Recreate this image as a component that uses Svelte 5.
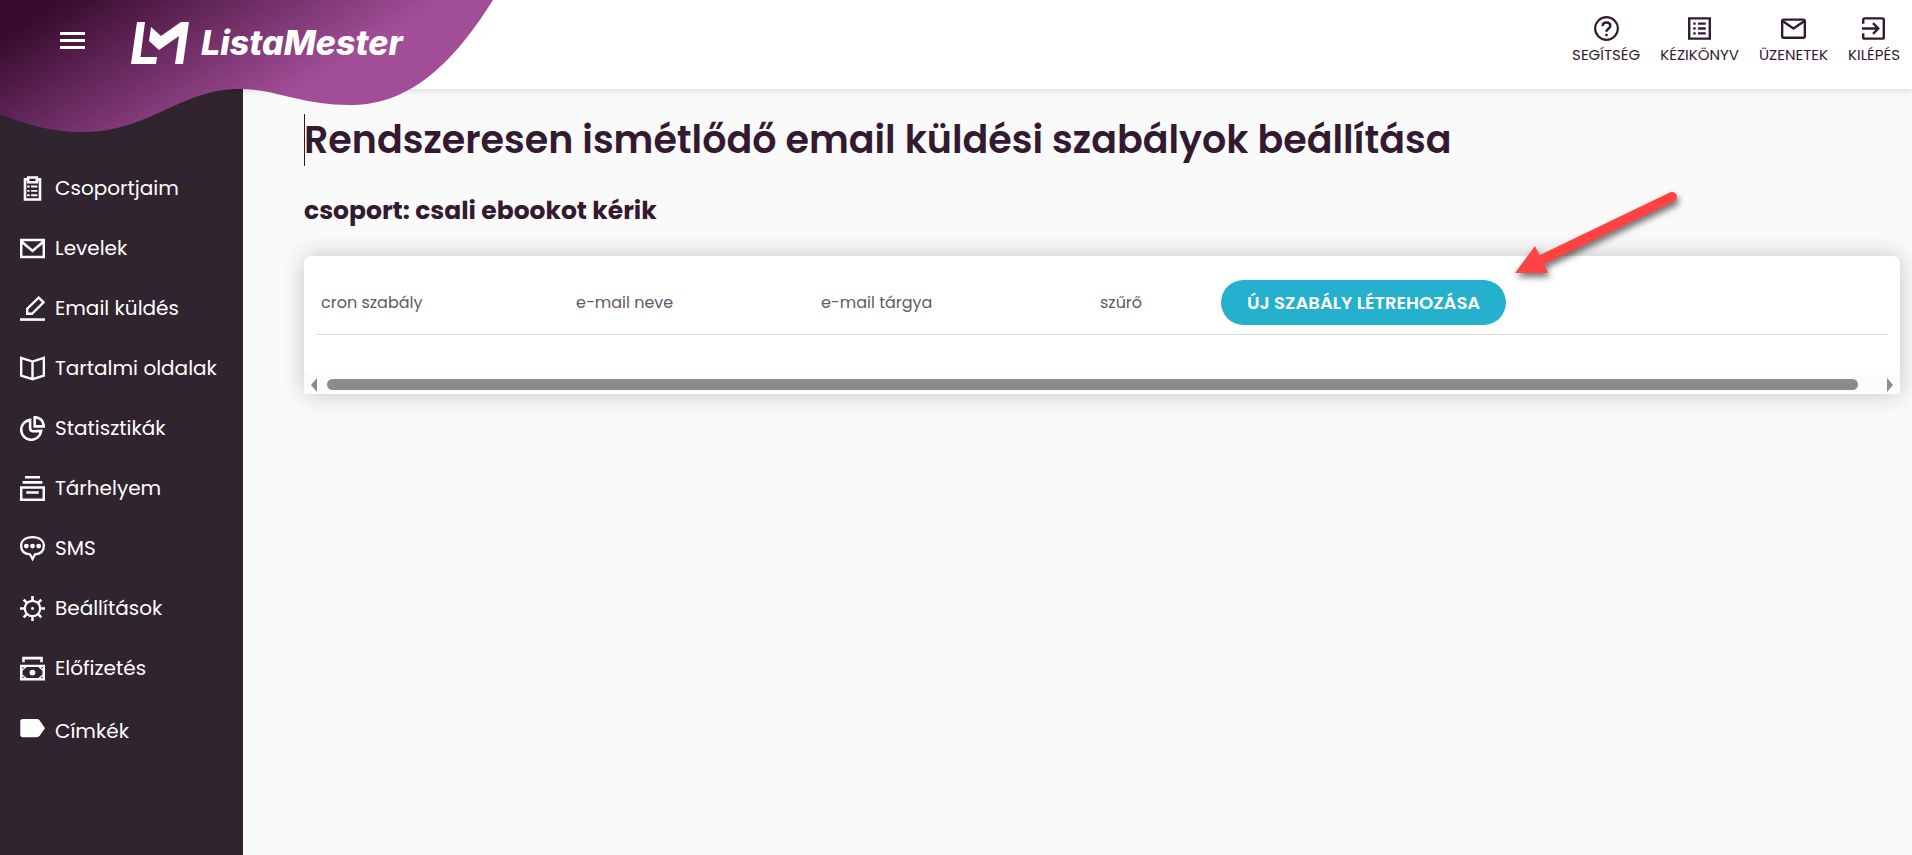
<script>
  const menu = [
    ['Csoportjaim', 'clip'], ['Levelek', 'mail'], ['Email küldés', 'pen'], ['Tartalmi oldalak', 'book'], ['Statisztikák', 'pie'],
    ['Tárhelyem', 'box'], ['SMS', 'sms'], ['Beállítások', 'gear'], ['Előfizetés', 'cash'], ['Címkék', 'tag']
  ];
  const tools = [['SEGÍTSÉG', 'help'], ['KÉZIKÖNYV', 'list'], ['ÜZENETEK', 'msg'], ['KILÉPÉS', 'exit']];
</script>

{#snippet icon(name)}
  <svg class="icon" viewBox="0 0 26 26" fill="none" stroke="currentColor" stroke-width="2.700" aria-hidden="true">
    {#if name === 'clip'}
      <path d="M8.500 3.500H5.200V24.500H20.800V3.500H17.500M8.500 1.500H17.500V6.500H8.500Z" />
      <path d="M7.500 11h2.500M11.500 11h6.500M7.500 15.500h2.500M11.500 15.500h6.500M7.500 20h2.500M11.500 20h6.500" stroke-width="2" />
    {:else if name === 'mail'}
      <path d="M1.200 4.200H24.800V21.800H1.200ZM1.200 5.500L13 15.500L24.800 5.500" />
    {:else if name === 'pen'}
      <path d="M0 24.500H26" />
      <path d="M7.500 18.500V13.200L19.500 1.800L24.500 6.500L12.500 18.500Z" stroke-width="2.500" />
    {:else if name === 'book'}
      <path d="M1.200 2L13 5.800L24.800 2V20.500L13 24.200L1.200 20.500ZM13 5.800V24.200" stroke-width="2.500" />
    {:else if name === 'pie'}
      <path d="M10.500 4A10.400 10.400 0 1 0 22 15.500L13 15.800Q10.500 15.300 10.500 12.500ZM15.300 1.200V10.800H24.800Q24.200 2 15.300 1.200Z" />
    {:else if name === 'box'}
      <path d="M5.200 1.200H20.800M2.700 6.600H23.300M1.200 12H24.800V24.800H1.200ZM6.500 17.200H19.500" />
    {:else if name === 'sms'}
      <path d="M13 24L10.500 19.200C4.500 18.500 1.200 15 1.200 10.300C1.200 5 5.500 1.200 13 1.200S24.800 5 24.800 10.300C24.800 15 21.500 18.500 15.500 19.200Z" stroke-width="2.400" />
      <path d="M4.100 10.500a2.500 2.500 0 1 0 5 0a2.500 2.500 0 1 0-5 0M10.500 10.500a2.500 2.500 0 1 0 5 0a2.500 2.500 0 1 0-5 0M16.900 10.500a2.500 2.500 0 1 0 5 0a2.500 2.500 0 1 0-5 0" fill="currentColor" stroke="none" />
    {:else if name === 'gear'}
      <circle cx="13" cy="13" r="8" stroke-width="2.300" />
      <path d="M13 0V5M13 21V26M0 13H5M21 13H26M3.800 3.800L7.300 7.300M18.700 18.700L22.200 22.200M3.800 22.200L7.300 18.700M18.700 7.300L22.200 3.800" />
      <circle cx="13" cy="13" r="1.500" fill="currentColor" stroke="none" />
    {:else if name === 'cash'}
      <path d="M3.600 6.500V2.200H22.400V6.500" />
      <path fill="currentColor" stroke="none" fill-rule="evenodd" d="M0 9H26V25.500H0ZM7 11.500L2.600 15.300V19.200L7 23H19L23.400 19.200V15.300L19 11.500Z" />
      <circle cx="13" cy="17.200" r="3" fill="currentColor" stroke="none" />
      <path d="M2 11.800L4.200 13M24 11.800L21.800 13M2 22.800L4.200 21.500M24 22.800L21.800 21.500" stroke="#30242e" stroke-width="1" />
    {:else if name === 'tag'}
      <path fill="currentColor" stroke="none" d="M3 0H17.500Q19.500 0 20.500 1.500L26 9.500L20.500 17.500Q19.500 19 17.500 19H3Q.3 19 .3 16.500V2.500Q.3 0 3 0Z" />
    {:else if name === 'help'}
      <circle cx="13" cy="13" r="11.800" stroke-width="2.200" />
      <path d="M9 10.500Q9 6.800 13 6.800T17 10.300C17 13 13 13.200 13 16.500M13 18.500V21" stroke-width="2.500" />
    {:else if name === 'list'}
      <path d="M2.300 2.500H23.700V23.500H2.300Z" stroke-width="2.500" />
      <path d="M6.500 8H9M11.500 8H19.500M6.500 13H9M11.500 13H19.500M6.500 18H9M11.500 18H19.500" stroke-width="2.400" />
    {:else if name === 'msg'}
      <rect x="1.200" y="3.800" width="23.600" height="18.800" rx="1.500" stroke-width="2.500" />
      <path d="M2 5.500L13 13L24 5.500" stroke-width="2.500" />
    {:else if name === 'exit'}
      <path stroke-width="2.500" d="M2.300 8V4Q2.300 2.500 3.800 2.500H22.200Q23.700 2.500 23.700 4V22Q23.700 23.500 22.200 23.500H3.800Q2.300 23.500 2.300 22V18M1 13H17M12.500 7.500L18 13L12.500 18.500" />
    {/if}
  </svg>
{/snippet}

<div class="page">
  <header>
    <svg class="wave" width="494" height="133" viewBox="0 0 494 133" aria-hidden="true">
      <defs>
        <linearGradient id="plum" gradientUnits="userSpaceOnUse" x1="16" y1="26" x2="121" y2="197">
          <stop offset="0" stop-color="#360b2d" /><stop offset="1" stop-color="#a14d97" />
        </linearGradient>
      </defs>
      <path fill="url(#plum)" d="M0 0H493C445 77 400 105 350 105C300 105 275 89 240 89C180 89 150 132 82 132C50 132 25 124 0 114Z" />
    </svg>
    <button class="burger" aria-label="Menü"><span></span><span></span><span></span></button>
    <a class="brand" href="#top">
      <svg width="59" height="42" viewBox="0 0 59 42" fill="#fff" aria-hidden="true">
        <path d="M6 0H14L9.500 35H26L25 42H0ZM20 5L30 14L50 0H58L52 42H44L48 14L28 28L18 19Z" />
      </svg>
      <span>ListaMester</span>
    </a>
    <nav class="tools">
      {#each tools as [label, name]}
        <a href="#{name}">{@render icon(name)}<span>{label}</span></a>
      {/each}
    </nav>
  </header>
  <div class="body">
    <nav class="side">
      {#each menu as [label, name]}
        <a href="#{name}">{@render icon(name)}<span>{label}</span></a>
      {/each}
    </nav>
    <main>
      <h1>Rendszeresen ismétlődő email küldési szabályok beállítása</h1>
      <h2>csoport: csali ebookot kérik</h2>
      <section>
        <div class="card">
          <table>
            <thead>
              <tr>
                <th class="c1">cron szabály</th><th class="c2">e-mail neve</th><th class="c3">e-mail tárgya</th><th class="c4">szűrő</th>
                <th><button class="new">ÚJ SZABÁLY LÉTREHOZÁSA</button></th>
              </tr>
            </thead>
          </table>
        </div>
        <div class="scroll"><i class="left"></i><div class="thumb"></div><i class="right"></i></div>
        <svg class="arrow" width="180" height="104" viewBox="0 0 180 104" aria-hidden="true">
          <path d="M161 13L28 77" stroke="#ff4343" stroke-width="10" stroke-linecap="round" />
          <path d="M4 89L24 62L37 89Z" fill="#ff4343" />
        </svg>
      </section>
    </main>
  </div>
</div>

<style>
  :global(body) { margin: 0; }
  .page { min-height: 100vh; display: flex; flex-direction: column; background: #fafafa; color: #331a30; font-family: Poppins, Inter, sans-serif; }
  a { color: inherit; text-decoration: none; }
  .icon { width: 25px; height: 25px; flex: none; }
  header { position: relative; z-index: 1; height: 89px; box-sizing: border-box; display: flex; align-items: flex-start; background: #fff; box-shadow: 0 0 8px rgba(0, 0, 0, 0.2); }
  .wave { position: absolute; left: 0; top: 0; }
  .burger { position: relative; display: flex; flex-direction: column; gap: 4px; margin: 32px 0 0 60px; padding: 0; border: 0; background: none; }
  .burger span { width: 25px; height: 3px; background: #fff; }
  .brand { position: relative; display: flex; align-items: center; gap: 11px; margin: 22px 0 0 46px; color: #fff; font: italic 800 34px/42px Inter, sans-serif; }
  .tools { margin-left: auto; display: flex; gap: 20px; padding: 16px 12px 0 0; }
  .tools a { display: flex; flex-direction: column; align-items: center; gap: 4px; font-size: 15px; line-height: 20px; }
  .body { flex: 1; display: flex; }
  .side { width: 243px; flex: none; box-sizing: border-box; padding: 69px 0 0 20px; background: #30242e; color: #fff; }
  .side a { display: flex; align-items: center; gap: 10px; height: 60px; font-size: 20px; white-space: nowrap; }
  .side a:last-child { height: 66px; }
  main { flex: 1; min-width: 0; padding: 25px 12px 0 61px; }
  h1 { margin: 0; font-size: 38px; line-height: 52px; font-weight: 600; box-shadow: inset 1px 0 #331a30; }
  h2 { margin: 27px 0 27px; font-size: 25px; line-height: 36px; font-weight: 700; }
  section { position: relative; box-shadow: 0 0 24px rgba(0, 0, 0, 0.22); border-radius: 8px 8px 0 0; }
  .card { background: #fff; border-radius: 8px; padding: 12px 12px 40px; }
  table { width: 100%; border-collapse: collapse; table-layout: fixed; border-bottom: 1px solid #ddd; }
  th { padding: 12px 5px 9px; text-align: left; font-size: 16px; line-height: 24px; font-weight: 400; color: #66566a; }
  .c1 { width: 245px; } .c2 { width: 235px; } .c3 { width: 269px; } .c4 { width: 111px; }
  .new { display: block; height: 45px; padding: 0 26px; border: 0; border-radius: 23px; background: #25b0cd; color: #fff; font: 600 18px Poppins, Inter, sans-serif; white-space: nowrap; }
  .scroll { display: flex; align-items: center; height: 19px; padding: 0 7px; background: #fcfcfc; }
  .thumb { flex: 1; height: 11px; margin: 0 29px 0 10px; border-radius: 6px; background: #8b8b8b; }
  .left, .right { border: 7px solid transparent; border-width: 7px 0; }
  .left { border-right: 6px solid #8b8b8b; }
  .right { border-left: 6px solid #8b8b8b; }
  .arrow { position: absolute; left: 1207px; top: -72px; fill: none; filter: drop-shadow(2px 4px 3px rgba(0, 0, 0, 0.55)); }
</style>
